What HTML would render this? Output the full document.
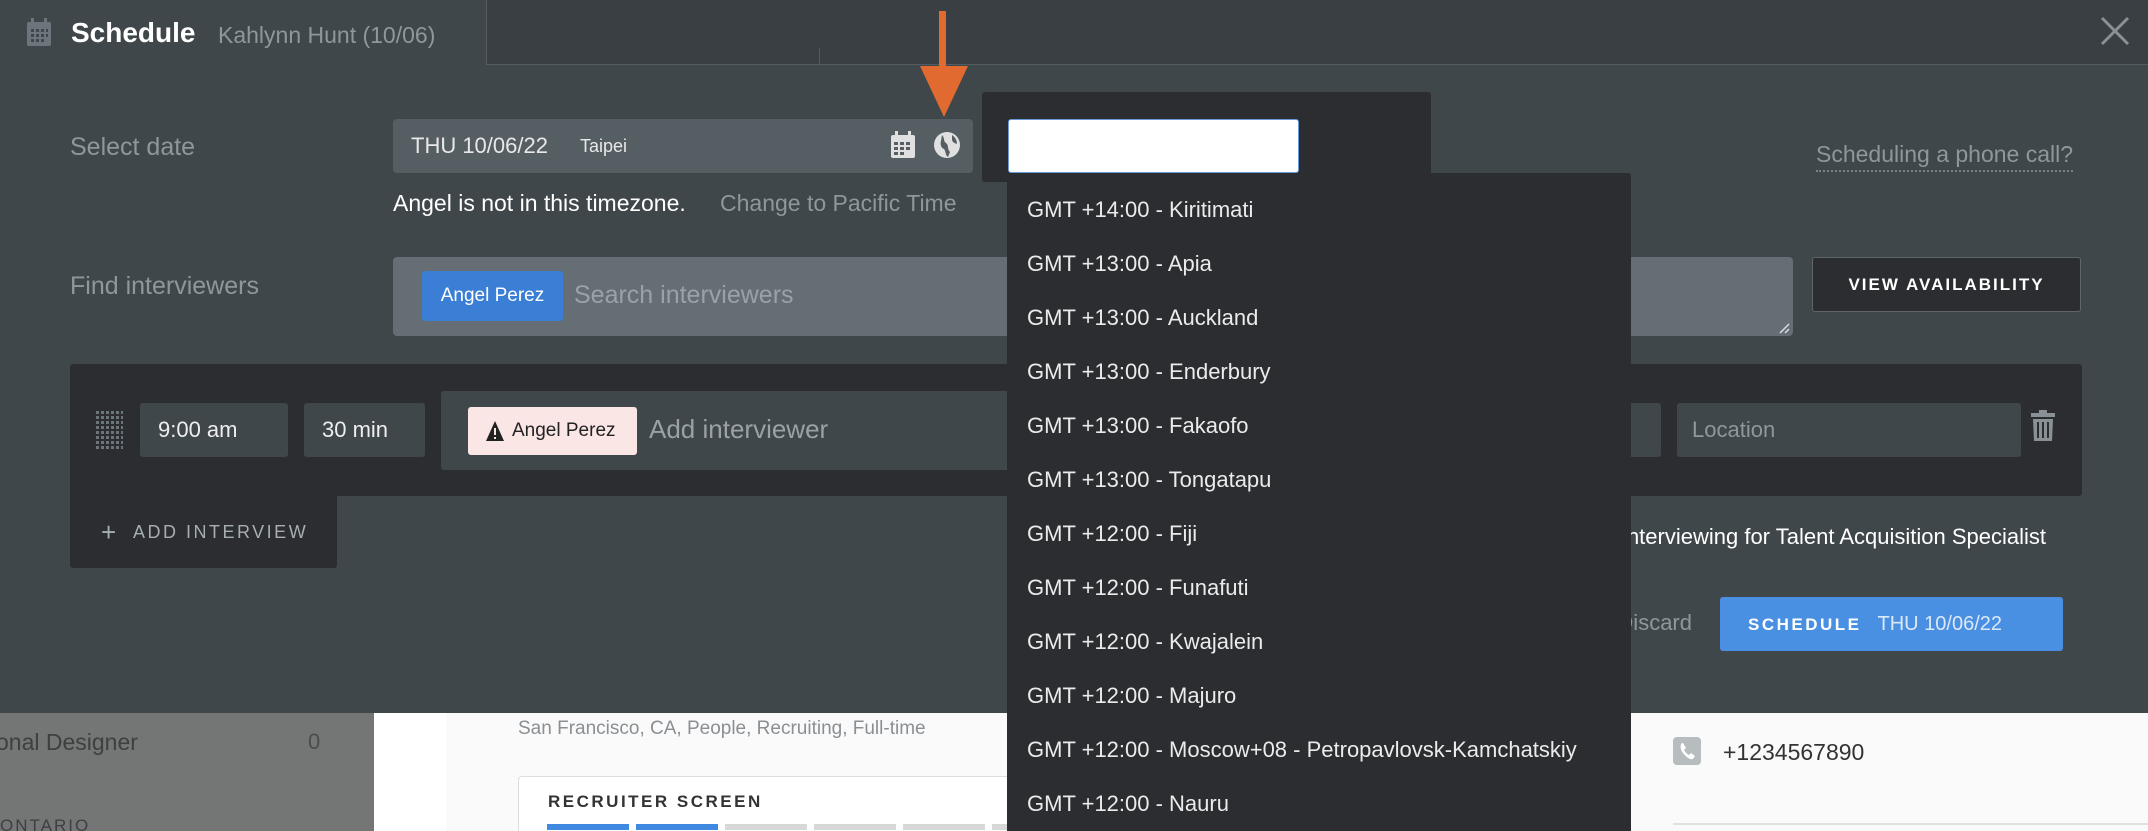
<!DOCTYPE html>
<html><head><meta charset="utf-8"><style>
*{margin:0;padding:0;box-sizing:border-box}
html,body{width:2148px;height:831px;overflow:hidden}
body{position:relative;background:#40474b;font-family:"Liberation Sans",sans-serif}
.a{position:absolute;white-space:nowrap}
.lbl{color:#8e979c;font-size:25px}
.tz{position:absolute;left:1027px;color:#ebebeb;font-size:22px}
</style></head><body>
<div class="a" style="left:486px;top:0;width:1662px;height:65px;background:#3a3f43;border-left:1px solid #555c61;border-bottom:1px solid #555c61"></div>
<div class="a" style="left:819px;top:48px;width:1px;height:16px;background:#555c61"></div>
<svg class="a" style="left:26px;top:17px" width="26" height="30" viewBox="0 0 26 30"><rect x="1" y="5" width="24" height="24" rx="2" fill="#6c757b"/><rect x="5" y="1" width="3" height="7" fill="#6c757b"/><rect x="18" y="1" width="3" height="7" fill="#6c757b"/><g fill="#40474b"><rect x="5" y="12" width="3" height="3"/><rect x="10" y="12" width="3" height="3"/><rect x="15" y="12" width="3" height="3"/><rect x="20" y="12" width="2" height="3"/><rect x="5" y="17" width="3" height="3"/><rect x="10" y="17" width="3" height="3"/><rect x="15" y="17" width="3" height="3"/><rect x="20" y="17" width="2" height="3"/><rect x="5" y="22" width="3" height="3"/><rect x="10" y="22" width="3" height="3"/><rect x="15" y="22" width="3" height="3"/></g></svg>
<div class="a" style="left:71px;top:17px;color:#fff;font-size:28px;font-weight:bold">Schedule</div>
<div class="a" style="left:218px;top:22px;color:#8e979c;font-size:23px">Kahlynn Hunt (10/06)</div>
<svg class="a" style="left:2100px;top:16px" width="30" height="30"><path d="M2 2L28 28M28 2L2 28" stroke="#8a9196" stroke-width="3"/></svg>

<div class="a lbl" style="left:70px;top:133px">Select date</div>
<div class="a" style="left:393px;top:119px;width:580px;height:54px;background:#555e63;border-radius:4px"></div>
<div class="a" style="left:411px;top:133px;color:#e8e8e8;font-size:22px">THU 10/06/22</div>
<div class="a" style="left:580px;top:136px;color:#e8e8e8;font-size:18px">Taipei</div>
<svg class="a" style="left:890px;top:131px" width="26" height="28" viewBox="0 0 26 28"><rect x="1" y="4" width="24" height="23" rx="2" fill="#e0e0e0"/><rect x="5" y="0" width="3" height="6" fill="#e0e0e0"/><rect x="18" y="0" width="3" height="6" fill="#e0e0e0"/><g fill="#555e63"><rect x="4" y="11" width="4" height="3"/><rect x="10" y="11" width="4" height="3"/><rect x="16" y="11" width="4" height="3"/><rect x="4" y="16" width="4" height="3"/><rect x="10" y="16" width="4" height="3"/><rect x="16" y="16" width="4" height="3"/><rect x="4" y="21" width="4" height="3"/><rect x="10" y="21" width="4" height="3"/></g></svg>
<svg class="a" style="left:933px;top:131px" width="28" height="28" viewBox="0 0 28 28"><circle cx="14" cy="14" r="13" fill="#e0e0e0"/><path d="M9 4c3 3 1 6 4 8 3 2 1 6 4 9l-2 5c-3-2-2-6-4-8-3-1-4-5-3-8z M19 4c3 2 5 5 5 9-2-1-4-1-5-4z" fill="#555e63"/></svg>
<div class="a" style="left:939px;top:11px;width:7px;height:58px;background:#e06a2f"></div>
<svg class="a" style="left:918px;top:66px" width="52" height="52"><path d="M2 0H50L26 51z" fill="#e06a2f"/></svg>
<div class="a" style="left:393px;top:190px;color:#fff;font-size:23px">Angel is not in this timezone.</div>
<div class="a" style="left:720px;top:190px;color:#8e979c;font-size:23px">Change to Pacific Time</div>
<div class="a" style="left:1816px;top:141px;color:#8e979c;font-size:23px;border-bottom:2px dotted #7a8287;padding-bottom:2px">Scheduling a phone call?</div>

<div class="a lbl" style="left:70px;top:272px">Find interviewers</div>
<div class="a" style="left:393px;top:257px;width:1400px;height:79px;background:#646e74;border-radius:4px"></div>
<svg class="a" style="left:1778px;top:322px" width="12" height="12"><path d="M11 2L2 11M11 7L7 11" stroke="#ddd" stroke-width="1.5"/></svg>
<div class="a" style="left:422px;top:271px;width:141px;height:50px;background:#3a7fd5;border-radius:3px;color:#fff;font-size:19px;line-height:50px;text-align:center">Angel Perez</div>
<div class="a" style="left:574px;top:281px;color:#9aa2a7;font-size:25px">Search interviewers</div>
<div class="a" style="left:1812px;top:257px;width:269px;height:55px;background:#2b2d30;border:1px solid #5e666b;border-radius:3px;color:#fff;font-size:17px;font-weight:bold;letter-spacing:2px;line-height:53px;text-align:center">VIEW AVAILABILITY</div>

<div class="a" style="left:70px;top:364px;width:2012px;height:132px;background:#2b2d30;border-radius:3px"></div>
<div class="a" style="left:70px;top:490px;width:267px;height:78px;background:#2b2d30;border-radius:0 0 3px 3px"></div>
<svg class="a" style="left:96px;top:411px" width="27" height="40"><defs><pattern id="d" width="5" height="5" patternUnits="userSpaceOnUse"><rect width="3" height="3" fill="#6c757b"/></pattern></defs><rect width="27" height="40" fill="url(#d)"/></svg>
<div class="a" style="left:140px;top:403px;width:148px;height:54px;background:#40474b;border-radius:3px;color:#eee;font-size:22px;line-height:54px;padding-left:18px">9:00 am</div>
<div class="a" style="left:304px;top:403px;width:121px;height:54px;background:#40474b;border-radius:3px;color:#eee;font-size:22px;line-height:54px;padding-left:18px">30 min</div>
<div class="a" style="left:441px;top:391px;width:1020px;height:79px;background:#40474b;border-radius:3px"></div>
<div class="a" style="left:1440px;top:403px;width:221px;height:54px;background:#40474b;border-radius:3px"></div>
<div class="a" style="left:468px;top:407px;width:169px;height:48px;background:#fbe6e6;border-radius:3px;color:#222;font-size:19px;line-height:48px;padding-left:44px">Angel Perez</div>
<svg class="a" style="left:485px;top:420px" width="20" height="22"><path d="M10 1L19 21H1z" fill="#222"/><rect x="9" y="8" width="2" height="7" fill="#fbe6e6"/><rect x="9" y="17" width="2" height="2" fill="#fbe6e6"/></svg>
<div class="a" style="left:649px;top:414px;color:#9aa2a7;font-size:26px">Add interviewer</div>
<div class="a" style="left:1677px;top:403px;width:344px;height:54px;background:#40474b;border-radius:3px;color:#8e979c;font-size:22px;line-height:54px;padding-left:15px">Location</div>
<svg class="a" style="left:2031px;top:410px" width="24" height="31" viewBox="0 0 24 31"><rect x="8" y="0" width="8" height="3" fill="#8a9196"/><rect x="0" y="3" width="24" height="4" fill="#8a9196"/><path d="M2 9H22L21 31H3z" fill="#8a9196"/><g fill="#2b2d30"><rect x="6" y="12" width="2" height="16"/><rect x="11" y="12" width="2" height="16"/><rect x="16" y="12" width="2" height="16"/></g></svg>
<div class="a" style="left:101px;top:517px;color:#a7aeb2;font-size:26px">+</div>
<div class="a" style="left:133px;top:522px;color:#a7aeb2;font-size:18px;letter-spacing:2.5px">ADD INTERVIEW</div>

<div class="a" style="right:102px;top:524px;color:#fff;font-size:22px">Angel Perez is interviewing for Talent Acquisition Specialist</div>
<div class="a" style="right:456px;top:610px;color:#8e979c;font-size:22px">Discard</div>
<div class="a" style="left:1720px;top:597px;width:343px;height:54px;background:#4a90e2;border-radius:3px;color:#fff;line-height:54px;padding-left:28px"><span style="font-size:17px;font-weight:bold;letter-spacing:2.5px">SCHEDULE</span><span style="font-size:20px;color:#dbe8f8;margin-left:16px">THU 10/06/22</span></div>

<div class="a" style="left:0;top:713px;width:2148px;height:118px;background:#fafafa"></div>
<div class="a" style="left:0;top:713px;width:374px;height:118px;background:#737675"></div>
<div class="a" style="left:374px;top:713px;width:72px;height:118px;background:#fff"></div>
<div class="a" style="left:-4px;top:729px;color:#3d3f40;font-size:23px">onal Designer</div>
<div class="a" style="left:308px;top:729px;color:#4a4c4d;font-size:22px">0</div>
<div class="a" style="left:0;top:816px;height:15px;overflow:hidden;color:#3d3f40;font-size:17px;letter-spacing:2px">ONTARIO</div>
<div class="a" style="left:518px;top:718px;color:#8a8f93;font-size:19px">San Francisco, CA, People, Recruiting, Full-time</div>
<div class="a" style="left:518px;top:776px;width:600px;height:55px;background:#fff;border:1px solid #ddd;border-bottom:none;border-radius:4px 4px 0 0"></div>
<div class="a" style="left:548px;top:792px;color:#333;font-size:17px;font-weight:bold;letter-spacing:2.5px">RECRUITER SCREEN</div>
<div class="a" style="left:547px;top:824px;width:82px;height:6px;background:#3f8ae0"></div>
<div class="a" style="left:636px;top:824px;width:82px;height:6px;background:#3f8ae0"></div>
<div class="a" style="left:725px;top:824px;width:82px;height:6px;background:#d8d8d8"></div>
<div class="a" style="left:814px;top:824px;width:82px;height:6px;background:#d8d8d8"></div>
<div class="a" style="left:903px;top:824px;width:82px;height:6px;background:#d8d8d8"></div>
<div class="a" style="left:992px;top:824px;width:82px;height:6px;background:#d8d8d8"></div>
<svg class="a" style="left:1673px;top:737px" width="28" height="28"><rect width="28" height="28" rx="4" fill="#b7bcbf"/><path d="M9 6c-2 2-2 6 1 10s7 7 10 6l2-3-4-3-2 2c-2-1-4-3-5-5l2-2-3-5z" fill="#fff"/></svg>
<div class="a" style="left:1723px;top:739px;color:#333;font-size:23px">+1234567890</div>
<div class="a" style="left:1673px;top:823px;width:475px;height:2px;background:#e0e0e0"></div>

<div class="a" style="left:982px;top:92px;width:449px;height:90px;background:#2b2d30;border-radius:3px"></div>
<div class="a" style="left:1008px;top:119px;width:291px;height:54px;background:#fff;border:1px solid #6a9ad8;border-radius:3px"></div>
<div class="a" style="left:1007px;top:173px;width:624px;height:658px;background:#2b2d30;border-radius:3px 3px 0 0"></div>
<div class="tz" style="top:197px">GMT +14:00 - Kiritimati</div>
<div class="tz" style="top:251px">GMT +13:00 - Apia</div>
<div class="tz" style="top:305px">GMT +13:00 - Auckland</div>
<div class="tz" style="top:359px">GMT +13:00 - Enderbury</div>
<div class="tz" style="top:413px">GMT +13:00 - Fakaofo</div>
<div class="tz" style="top:467px">GMT +13:00 - Tongatapu</div>
<div class="tz" style="top:521px">GMT +12:00 - Fiji</div>
<div class="tz" style="top:575px">GMT +12:00 - Funafuti</div>
<div class="tz" style="top:629px">GMT +12:00 - Kwajalein</div>
<div class="tz" style="top:683px">GMT +12:00 - Majuro</div>
<div class="tz" style="top:737px">GMT +12:00 - Moscow+08 - Petropavlovsk-Kamchatskiy</div>
<div class="tz" style="top:791px;height:40px;overflow:hidden">GMT +12:00 - Nauru</div>
</body></html>
